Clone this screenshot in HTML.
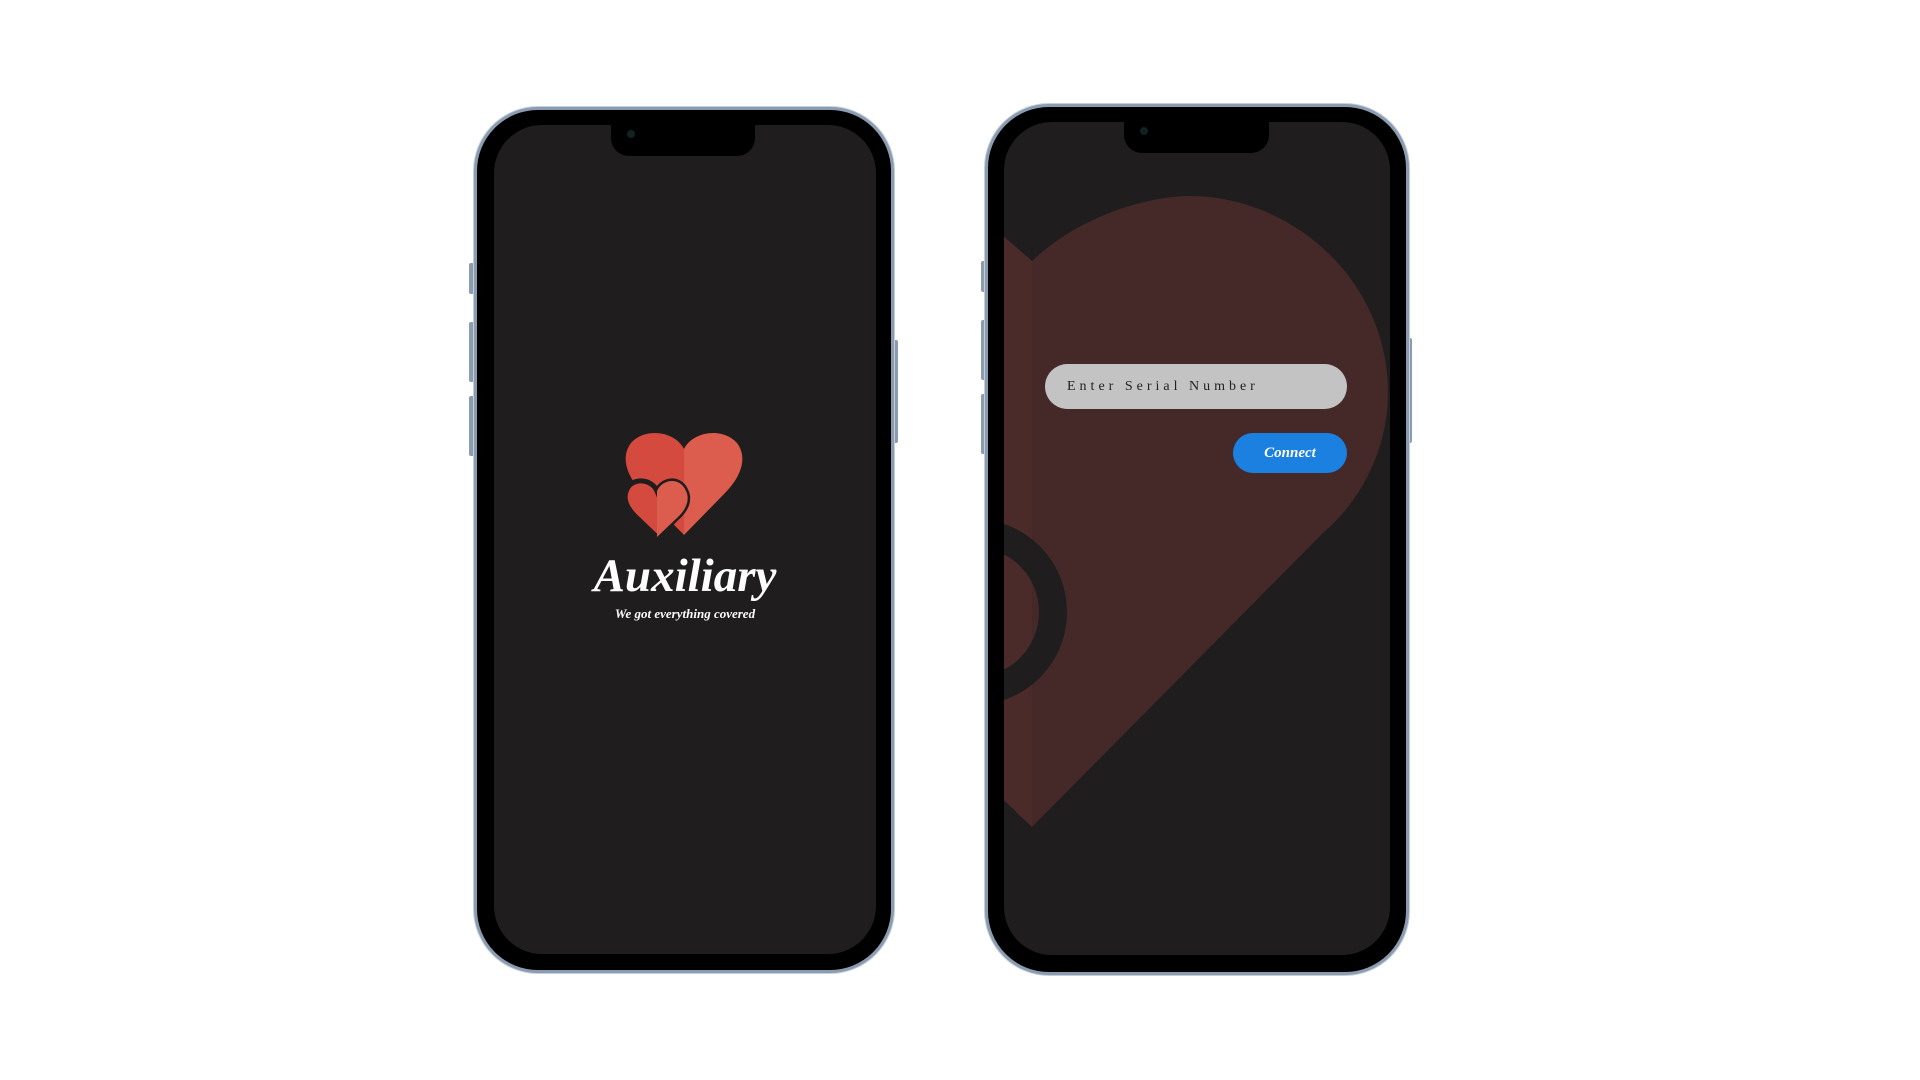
<!DOCTYPE html>
<html><head><style>
body{margin:0;width:1920px;height:1080px;background:#fff;position:relative;overflow:hidden;font-family:"Liberation Sans",sans-serif}
.ph{position:absolute;border-radius:64px;background:#000;border:3px solid #8b9bb0;box-shadow:0 0 0 1px #c5cfdb}
.scr{position:absolute;background:#1f1d1e;border-radius:48px;overflow:hidden}
.notch{position:absolute;background:#000;border-radius:0 0 18px 18px}
.btn{position:absolute;width:5px;background:#8b9bb0;border-radius:2px}
</style></head><body>
<div class="btn" style="left:469px;top:263px;height:31px"></div>
<div class="btn" style="left:469px;top:322px;height:60px"></div>
<div class="btn" style="left:469px;top:396px;height:60px"></div>
<div class="btn" style="left:893px;top:340px;height:103px"></div>
<div class="ph" style="left:474px;top:107px;width:414px;height:860px"></div>
<div class="scr" style="left:494px;top:125px;width:382px;height:829px">
 <svg style="position:absolute;left:131px;top:306px" width="118" height="106" viewBox="0 0 118 106">
  <path d="M59 18 C50 0 20 -4 6 12 C-6 28 4 48 18 62 L59 104 Z" fill="#d44a3f"/>
  <path d="M59 18 C68 0 98 -4 112 12 C124 28 114 48 100 62 L59 104 Z" fill="#dc5d4d"/>
  <path d="M32 60 C27 48 8 46 2 58 C-3 68 3 78 10 85 L32 106 L54 85 C61 78 66 68 60 58 C54 46 37 48 32 60 Z" fill="#d44a3f" stroke="#1f1d1e" stroke-width="5"/>
  <path d="M32 60 C37 48 54 46 60 58 C66 68 61 78 54 85 L32 106 Z" fill="#dc5d4d"/>
 </svg>
 <div style="position:absolute;left:0;width:382px;top:424px;text-align:center;color:#fff;font-family:'Liberation Serif',serif;font-style:italic;font-weight:bold;font-size:47px">Auxiliary</div>
 <div style="position:absolute;left:0;width:382px;top:481px;text-align:center;color:#fff;font-family:'Liberation Serif',serif;font-style:italic;font-weight:bold;font-size:13px">We got everything covered</div>
</div>
<div class="notch" style="left:611px;top:122px;width:144px;height:34px"><div style="position:absolute;left:16px;top:8px;width:8px;height:8px;border-radius:50%;background:#122"></div></div>

<div class="btn" style="left:981px;top:261px;height:31px"></div>
<div class="btn" style="left:981px;top:320px;height:60px"></div>
<div class="btn" style="left:981px;top:394px;height:60px"></div>
<div class="btn" style="left:1407px;top:338px;height:105px"></div>
<div class="ph" style="left:985px;top:104px;width:418px;height:865px"></div>
<div class="scr" style="left:1004px;top:122px;width:386px;height:833px">
 <svg style="position:absolute;left:0;top:0" width="386" height="833">
  <path d="M28 139 C80 90 150 74 185 74 C290 74 384 160 384 270 C384 330 355 380 320 410 L28 705 L-40 640 L-40 80 Z" fill="#442928"/>
  <path d="M-40 80 L28 139 L28 705 L-40 640 Z" fill="#4a2b2a"/>
  <circle cx="-30" cy="490" r="79" fill="none" stroke="#1f1d1e" stroke-width="28"/>
 </svg>
 <div style="position:absolute;left:41px;top:242px;width:302px;height:45px;border-radius:23px;background:#c3c3c3;color:#222;font-family:'Liberation Serif',serif;font-size:14px;letter-spacing:4px;line-height:45px;text-indent:22px">Enter Serial Number</div>
 <div style="position:absolute;left:229px;top:311px;width:114px;height:40px;border-radius:20px;background:#1b80e0;color:#fff;font-family:'Liberation Serif',serif;font-style:italic;font-weight:bold;font-size:15px;line-height:40px;text-align:center">Connect</div>
</div>
<div class="notch" style="left:1124px;top:119px;width:145px;height:34px"><div style="position:absolute;left:16px;top:8px;width:8px;height:8px;border-radius:50%;background:#122"></div></div>
</body></html>
